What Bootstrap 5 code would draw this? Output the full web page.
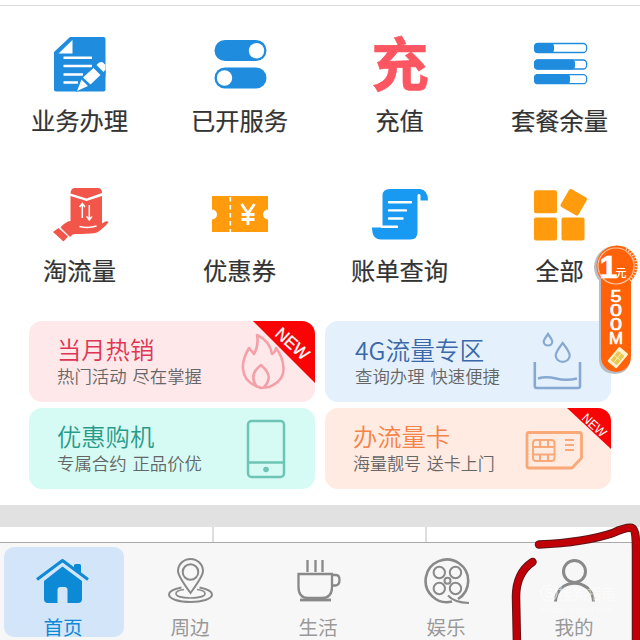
<!DOCTYPE html>
<html lang="zh-CN">
<head>
<meta charset="utf-8">
<meta name="viewport" content="width=device-width, initial-scale=1">
<title>首页</title>
<link href="https://cdn.jsdelivr.net/npm/bootstrap@5.3.0/dist/css/bootstrap.min.css" rel="stylesheet">
<style>
body{width:640px;height:640px;overflow:hidden;background:#fff;font-family:"Noto Sans CJK SC",sans-serif;color:#333}
svg{display:block;flex:none}
.topline{height:6px;border-bottom:1px solid #dcdcdc}
.service{height:150px;padding-top:30px}
.service-label{font-size:24.3px;line-height:36px;margin-top:8px;font-weight:400;-webkit-text-stroke:.2px #333;white-space:nowrap;padding-right:1px}
.promos{display:grid;grid-template-columns:286px 286px;gap:6px 10px;padding:15px 29px 16px}
.promo{height:81px;border-radius:13px}
.promo-text{padding:13px 0 0 28px;white-space:nowrap}
.promo-title{font-size:24.3px;line-height:30px;font-weight:350}
.data .promo-title{font-size:24.7px}
.promo-sub{font-size:17.4px;line-height:24px;color:#666;font-weight:350;word-spacing:2px}
.hot{background:#ffe8ea}.hot .promo-title{color:#dc3654}
.data{background:#e4f1fd}.data .promo-title{color:#3a68a8}.data .promo-text{padding-left:30px}
.buy{background:#d5fbf4}.buy .promo-title{color:#2a9a89}
.sim{background:#ffebe2}.sim .promo-title{color:#f58246}
.sim .promo-sub{font-size:17px}
.ribbon{top:0;right:0}
.band{height:22px;background:#e1e1e1}
.columns{height:15px}
.columns>div{border-right:2px solid #dedede;width:214px}
.columns>div:first-child{width:215px}
.columns>div:last-child{border:0}
.tabs{height:98px;background:#f7f7f7;border-top:1px solid #a9a9a9}
.tab{width:128px;padding:4px 5px 0 3px;color:#999}
.tab-box{width:120px;height:90px;border-radius:10px;padding-top:9px}
.tab-box.on{background:#d2e5f9;color:#0c8ad5}
.tab-label{font-size:19.6px;line-height:26px;margin-top:8px;padding-right:2px}
.float{left:592px;top:242px}
.pen{left:0;top:0;pointer-events:none}
text{font-family:"Liberation Sans","Noto Sans CJK SC",sans-serif}
.cjk{font-family:"Noto Sans CJK SC",sans-serif}
</style>
<script src="https://cdn.jsdelivr.net/npm/bootstrap@5.3.0/dist/js/bootstrap.bundle.min.js"></script>
</head>
<body class="position-relative">
<div class="topline"></div>
<main>
<div class="row row-cols-4 g-0 text-center">
  <div class="col service d-flex flex-column align-items-center">
    <svg width="60" height="58" viewBox="50 36 60 58"><path fill="#1f8cde" d="M70 37h33.500q2 0 2 2v50.500q0 2-2 2H56q-2 0-2-2V52z"/><path fill="#fff" d="M72.500 40v13.500H58.500z"/><path stroke="#fff" stroke-width="2.600" d="M63.500 57.800H92M63.500 66H92M63.500 74.500H83M63.500 82.500H78"/><path fill="#1f8cde" d="M76 91.500l5-14 18-17 6.500 6v10L87 90z"/><path fill="#fff" d="M77 91l4.500-11.500 6.500 6.500zM83 77.500l10.500-9.500 7 7L90.500 84.500zM96.500 65q3.500-4.500 6.500-2.500l2.500 2.500v4.500l-2 2.500z"/></svg>
    <div class="service-label">业务办理</div>
  </div>
  <div class="col service d-flex flex-column align-items-center">
    <svg width="60" height="58" viewBox="210 36 60 58"><rect x="214.500" y="40" width="52" height="21" rx="10.500" fill="#1f8cde"/><rect x="214.500" y="67.500" width="52" height="21" rx="10.500" fill="#1f8cde"/><circle cx="256.500" cy="50.700" r="7.700" fill="#fff"/><circle cx="224.500" cy="78" r="7.700" fill="#fff"/></svg>
    <div class="service-label">已开服务</div>
  </div>
  <div class="col service d-flex flex-column align-items-center">
    <svg width="60" height="58" overflow="visible" viewBox="370 36 60 58"><text class="cjk" x="400" y="86" text-anchor="middle" font-size="57.500" font-weight="700" fill="#fb5661" stroke="#fb5661" stroke-width=".6">充</text></svg>
    <div class="service-label">充值</div>
  </div>
  <div class="col service d-flex flex-column align-items-center">
    <svg width="60" height="58" viewBox="530 36 60 58"><g fill="#fff" stroke="#1f8cde" stroke-width="1.300"><rect x="534.600" y="43.500" width="52" height="9" rx="3.500"/><rect x="534.600" y="60" width="52" height="9" rx="3.500"/><rect x="534.600" y="74.700" width="52" height="9" rx="3.500"/></g><g fill="#1f8cde"><rect x="534" y="43" width="20" height="10" rx="3.500"/><rect x="534" y="59.500" width="41" height="10" rx="3.500"/><rect x="534" y="74" width="36" height="10" rx="3.500"/></g></svg>
    <div class="service-label">套餐余量</div>
  </div>
  <div class="col service d-flex flex-column align-items-center">
    <svg width="60" height="58" viewBox="50 186 60 58"><path fill="#f2564a" d="M74 188h25q3 1 3 5L86.500 198.500 70.500 193.500q0-4.500 3.500-5.500zM70.500 196l16 5 15.500-5v27.500q5-3.500 6.500-1.500-2 3-8.500 8.500-3 3-9 3-12 .5-16 .5-3 0-5 3l-9.500-9.500q5-6 10-6.500zM58.500 228l9.500 8.500-4.500 5-10.500-9.500z"/><path fill="none" stroke="#fff" stroke-width="1.500" d="M82.300 218v-15m-2.700 4l2.700-3.600 2.700 3.600M89.300 205v15m-2.700-3.600l2.700 3.600 2.700-3.600M79.500 226.500q9 2 17-.5"/></svg>
    <div class="service-label">淘流量</div>
  </div>
  <div class="col service d-flex flex-column align-items-center">
    <svg width="60" height="58" viewBox="210 186 60 58"><path fill="#ff9b0c" d="M212 196h56v13.500a5 5 0 0 0 0 10V232H212v-12.500a5 5 0 0 0 0-10z"/><path stroke="#fff" stroke-width="1.700" stroke-dasharray="4.500 3.500" d="M230.300 197v35"/><path fill="none" stroke="#fff" stroke-width="2.800" d="M241.500 204l6.500 9.500 6.500-9.500M248 213v12M241.500 214.500h13M241.500 219.500h13"/></svg>
    <div class="service-label">优惠券</div>
  </div>
  <div class="col service d-flex flex-column align-items-center">
    <svg width="60" height="58" viewBox="370 186 60 58"><path fill="#1899f2" d="M390 189h30q8 1 8 11.500h-7.500v-5.500q-1.500-2-3 0v37q0 7.500-7 7.500H381q-9 0-9-12h10.500v-32q0-6.500 7.500-6.500z"/><path stroke="#fff" stroke-width="2.400" stroke-linecap="round" d="M389 202.200h22M389 210.400h17M389 218.500h13.500M382 226.700h15"/></svg>
    <div class="service-label">账单查询</div>
  </div>
  <div class="col service d-flex flex-column align-items-center">
    <svg width="60" height="58" viewBox="530 186 60 58"><g fill="#ff9b0c"><rect x="534" y="190.300" width="23" height="23" rx="2"/><rect x="534" y="217.500" width="23" height="23" rx="2"/><rect x="561.500" y="217.500" width="23" height="23" rx="2"/><rect x="563.500" y="192" width="20.500" height="20.500" rx="2" transform="rotate(30 573.700 202.300)"/></g></svg>
    <div class="service-label">全部</div>
  </div>
</div>

<div class="promos">
  <div class="promo hot position-relative overflow-hidden d-flex">
    <div class="promo-text flex-grow-1"><div class="promo-title">当月热销</div><div class="promo-sub">热门活动 尽在掌握</div></div>
    <svg width="80" height="81" viewBox="235 321 80 81"><path fill="none" stroke="#f4a0a8" stroke-width="2.600" stroke-linejoin="round" d="M256 386q-12-5-13-17-1-9 6-21l5 6q5-9 3-19 13 6 15 19 3-1 4-6 7 9 7.500 20 .5 13-14.500 19l-8 1zM257 387q-9-12 4-22 9 8 7.500 14-1 5-4.500 8"/></svg>
    <svg class="ribbon position-absolute" width="64" height="62" overflow="visible" viewBox="251 321 64 62"><path fill="#f90305" d="M253 321h62v62z"/><text transform="translate(274 335) rotate(42)" font-size="17" fill="#fff" stroke="#fff" stroke-width=".3" textLength="39" lengthAdjust="spacingAndGlyphs">NEW</text></svg>
  </div>
  <div class="promo data d-flex">
    <div class="promo-text flex-grow-1"><div class="promo-title">4G流量专区</div><div class="promo-sub">查询办理 快速便捷</div></div>
    <svg width="86" height="81" viewBox="525 321 86 81"><g fill="none" stroke="#87a9d1" stroke-width="2.600"><path d="M534.800 362v24q0 2 2 2H578q2 0 2-2v-24"/><path d="M538 378.500q8-2.500 18 0t21 0"/><path stroke-width="2.200" d="M562.700 343q-7 9-7 12.500a7 6.300 0 0 0 14 0q0-3.500-7-12.500zM548 334q-4.300 6-4.300 7.500a4.300 4 0 0 0 8.600 0q0-1.500-4.300-7.500z"/></g></svg>
  </div>
  <div class="promo buy d-flex">
    <div class="promo-text flex-grow-1"><div class="promo-title">优惠购机</div><div class="promo-sub">专属合约 正品价优</div></div>
    <svg width="80" height="81" viewBox="235 408 80 81"><g fill="none" stroke="#6ec5b5" stroke-width="2.500"><rect x="248" y="421" width="36" height="56" rx="3.500"/><path d="M248 462.500h36"/></g><circle cx="266" cy="469.500" r="2.800" fill="#6ec5b5"/></svg>
  </div>
  <div class="promo sim position-relative overflow-hidden d-flex">
    <div class="promo-text flex-grow-1"><div class="promo-title">办流量卡</div><div class="promo-sub">海量靓号 送卡上门</div></div>
    <svg width="91" height="81" viewBox="520 408 91 81"><g fill="none" stroke="#f9a878" stroke-width="2.800" stroke-linejoin="round"><path d="M529 432.500h50q2.500 0 2.500 2.500v23l-9.500 10H529q-2 0-2-2v-31.500q0-2 2-2z"/><g stroke-width="2"><rect x="533" y="440" width="21.500" height="21" rx="3"/><path d="M533 447h21.500M533 454.500h7M547.500 454.500h7M540 440v7M548 440v7M540 454.500v6.500M548 454.500v6.500M540 454.500h8"/><path d="M565 440h9M565 445h9M565 450h9"/></g></g></svg>
    <svg class="ribbon position-absolute" width="45" height="42" viewBox="566 408 45 42"><path fill="#f90305" d="M567 408h44v41z"/><text transform="translate(581 419) rotate(43)" font-size="13" fill="#fff" textLength="28" lengthAdjust="spacingAndGlyphs">NEW</text></svg>
  </div>
</div>
<div class="band"></div>
<div class="columns d-flex"><div></div><div></div><div></div></div>
</main>

<nav class="tabs d-flex text-center">
  <div class="tab ps-1"><div class="tab-box on d-flex flex-column align-items-center">
    <svg width="60" height="50" viewBox="34 556 60 50"><path fill="#0c8ad5" d="M62.500 566.500L82 581v18q0 4-4 4H67.500v-13q0-3-3-3h-4q-3 0-3 3v13H48q-4 0-4-4v-18zM74 565.500q0-1.500 1.500-1.500h4q1.500 0 1.500 1.500V575l-7-5z"/><path fill="none" stroke="#0c8ad5" stroke-width="3" stroke-linejoin="round" d="M37 579.500L62.500 560.500 88 579.500"/></svg>
    <div class="tab-label">首页</div></div></div>
  <div class="tab"><div class="tab-box d-flex flex-column align-items-center">
    <svg width="60" height="50" viewBox="161 556 60 50"><g fill="none" stroke="#898989" stroke-width="2"><path d="M190.500 593q-12.500-17-12.500-22a12.500 12 0 0 1 25 0q0 5-12.500 22z"/><circle cx="190.500" cy="572" r="7.800"/><path d="M181.500 587.500Q169 590 169 594.500C169 599 179 602 190.500 602S212 599 212 594.500Q212 590 199.500 587.500"/><path stroke-width="1.600" d="M184 589.500q-8 1-8 4c0 3 7 4.500 14.500 4.500s14.500-1.500 14.500-4.500q0-3-8-4"/></g></svg>
    <div class="tab-label">周边</div></div></div>
  <div class="tab"><div class="tab-box d-flex flex-column align-items-center">
    <svg width="60" height="50" viewBox="289 556 60 50"><g fill="none" stroke="#898989" stroke-width="2.300"><path d="M307.500 560v12M315.500 560v12M322.500 560v12M298.500 574H332v13q0 11-10 11H308q-9.500 0-9.500-11zM332 575h4q3.500 0 3.500 5t-4 5.500H332"/><path stroke-width="2.800" d="M300 600h31"/></g></svg>
    <div class="tab-label">生活</div></div></div>
  <div class="tab"><div class="tab-box d-flex flex-column align-items-center">
    <svg width="60" height="50" viewBox="416 556 60 50"><g fill="none" stroke="#898989" stroke-width="2"><path stroke-width="2.600" d="M451 601.500A21.300 21.300 0 1 1 457 599"/><circle cx="438.300" cy="572.500" r="5.700"/><circle cx="454.500" cy="572.500" r="5.700"/><circle cx="438.300" cy="588.500" r="5.700"/><circle cx="454.500" cy="588.500" r="5.700"/><circle cx="446.500" cy="580.700" r="3"/><path d="M447 595.500q6 7 21 7.500"/></g></svg>
    <div class="tab-label">娱乐</div></div></div>
  <div class="tab"><div class="tab-box d-flex flex-column align-items-center">
    <svg width="60" height="50" viewBox="545 556 60 50"><g fill="none" stroke="#898989" stroke-width="3"><circle cx="574.500" cy="571.500" r="11"/><path d="M555.500 601.500C557 577 592 577 593.500 601.500"/></g></svg>
    <div class="tab-label">我的</div></div></div>
</nav>

<svg class="float position-absolute" width="48" height="136" viewBox="592 242 48 136"><path fill="#b9bcc2" d="M599 272h31v86q0 15-15 16-16-1-16-15z"/><circle cx="615" cy="267" r="21" fill="#b9bcc2"/><path fill="#ff6208" d="M601 275h30v82a15 15 0 0 1-30 0z"/><circle cx="617" cy="266" r="20.500" fill="#ff6208"/><circle cx="616" cy="266" r="18" fill="#ff6208" stroke="#ffc19b" stroke-width="1.200"/><path fill="none" stroke="#ffd7bc" stroke-width="3" stroke-dasharray="1 2" d="M626 249a19 19 0 0 1 3 32"/><text x="599.500" y="278" font-size="32" font-weight="700" fill="#fff" stroke="#fff" stroke-width=".7">1</text><text class="cjk" x="615.500" y="277" font-size="11" font-weight="500" fill="#fff">元</text><g font-size="17" fill="#fff" stroke="#fff" stroke-width=".7" text-anchor="middle"><text x="616" y="301.500" textLength="11" lengthAdjust="spacingAndGlyphs">5</text><text x="616" y="315.500" textLength="12" lengthAdjust="spacingAndGlyphs">0</text><text x="616" y="329.500" textLength="12" lengthAdjust="spacingAndGlyphs">0</text><text x="616" y="343.500" textLength="14" lengthAdjust="spacingAndGlyphs">M</text></g><g transform="rotate(40 617.500 358)"><rect x="611.500" y="348" width="12" height="19" rx="1.500" fill="#fff3cf"/><rect x="613.500" y="352" width="8" height="12" rx="1" fill="#e9c64c"/><path stroke="#fff3cf" stroke-width=".8" d="M613.500 358h8M617.500 352v12"/></g></svg>

<svg class="pen position-absolute" width="640" height="640" viewBox="0 0 640 640"><g fill="#fff" opacity=".55"><circle cx="549" cy="593" r="8" fill="none" stroke="#fff" stroke-width="1.500"/><text x="544.500" y="598" font-size="14" font-weight="700">S</text><text class="cjk" x="558" y="599" font-size="14.500">搜狗指南</text><text x="540" y="613" font-size="9">zhinan.sogou.com</text></g><g fill="none" stroke-linecap="round" stroke-linejoin="round"><path stroke="#5d1517" stroke-width="8.500" d="M539 544.500C575 543 595 539 613 533Q626 527 632 528C636 530 636 540 636 552V644M532.500 562Q516 573 516 597L517 644"/><path stroke="#c00006" stroke-width="6.500" d="M539 544.500C575 543 595 539 613 533Q626 527 632 528C636 530 636 540 636 552V644M532.500 562Q516 573 516 597L517 644"/></g></svg>
</body>
</html>
